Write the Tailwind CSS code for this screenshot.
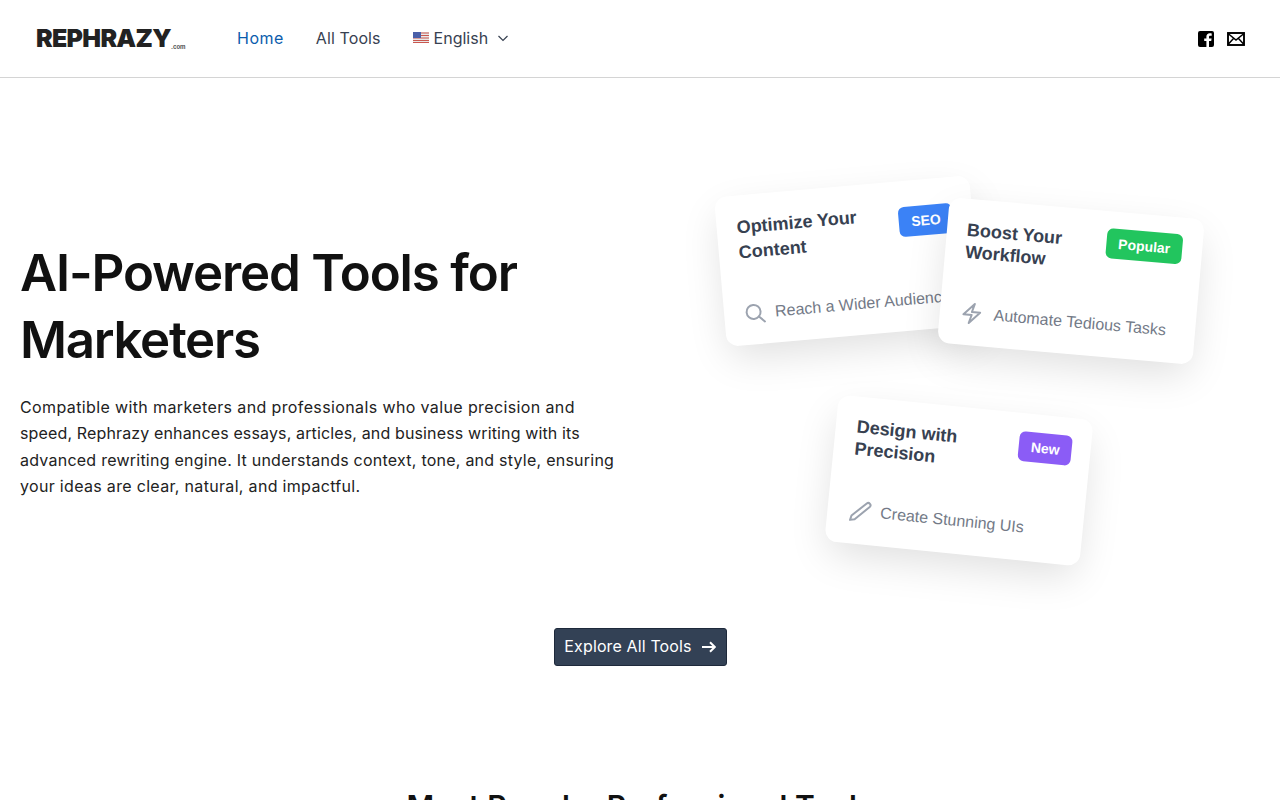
<!doctype html>
<html lang="en"><head><meta charset="utf-8"><title>Rephrazy</title>
<script src="https://cdn.jsdelivr.net/npm/@tailwindcss/browser@4"></script></head>
<body class="bg-white">
<div class="h-[800px] overflow-hidden font-['Inter',sans-serif] text-[#374151]">
<header class="h-[78px] border-b border-[#d4d4d4] flex items-center pl-9 pr-[35px]">
  <div class="w-[201px] flex items-end text-[#222] leading-none">
    <span class="text-[25px] font-black tracking-[-0.7px]">REPHRAZY</span><span class="text-[6px] font-bold text-[#555] mb-[1px]">.com</span>
  </div>
  <nav class="flex items-center gap-8 text-[16px] flex-1 pb-[2px]">
    <a class="text-[#0b5cad] tracking-[0.5px]">Home</a>
    <a class="tracking-[0.1px]">All Tools</a>
    <div class="flex items-center">
      <svg width="16" height="11" viewBox="0 0 16 11" class="mr-[5px]"><rect width="16" height="11" fill="#e8e8e8"/><path d="M0 1h16M0 3.500h16M0 6h16M0 8.500h16M0 10.500h16" stroke="#c9574f" stroke-width="1.200"/><rect width="8" height="6" fill="#4a5fa8"/></svg>
      <span>English</span>
      <svg width="12" height="12" viewBox="0 0 12 12" class="ml-[9px]" fill="none" stroke="#374151" stroke-width="1.200"><path d="M1.500 4l4.500 4.500L10.500 4"/></svg>
    </div>
  </nav>
  <div class="flex items-center gap-[12px]">
    <svg width="18" height="18" viewBox="0 0 18 18"><path fill="#000" d="M3 1h12a2 2 0 0 1 2 2v12a2 2 0 0 1-2 2h-3v-6h2.200l.4-2.600H12V7c0-.8.300-1.300 1.300-1.300h1.400V3.400c-.4 0-1.200-.1-2-.1-2 0-3.300 1.200-3.300 3.400v1.700H7.200V11h2.200v6H3a2 2 0 0 1-2-2V3a2 2 0 0 1 2-2z"/></svg>
    <svg width="18" height="14" viewBox="0 0 18 14" fill="none" stroke="#000" stroke-width="1.900"><rect x="1" y="1" width="16" height="12"/><path d="M1 1.500l8 6.500 8-6.500M1 12.500l5.500-6M17 12.500l-5.500-6" stroke-width="1.500"/></svg>
  </div>
</header>

<section class="h-[550px] flex items-start">
  <div class="w-[640px] pl-5 pt-[161px] shrink-0">
    <h1 class="text-[51px] leading-[67px] font-semibold text-[#111] tracking-[-1.150px]">AI-Powered Tools for<br><span class="tracking-[-1.300px]">Marketers</span></h1>
    <p class="mt-[21px] text-[16px] leading-[26.4px] text-[#222]"><span class="block tracking-[0.380px]">Compatible with marketers and professionals who value precision and</span><span class="block tracking-[0.140px]">speed, Rephrazy enhances essays, articles, and business writing with its</span><span class="block tracking-[0.240px]">advanced rewriting engine. It understands context, tone, and style, ensuring</span><span class="block tracking-[0.320px]">your ideas are clear, natural, and impactful.</span></p>
  </div>
  <div class="relative flex-1 h-full font-['Liberation_Sans',sans-serif]">
    <!-- card 1 -->
    <article class="absolute left-[80px] top-[108px] w-64 h-[150px] pl-5 pt-5 pr-5 bg-white rounded-xl shadow-[0_15px_40px_-4px_rgba(0,0,0,0.13)] rotate-[-5deg]">
      <div class="flex justify-between items-start">
        <h3 class="text-[18px] leading-[25px] font-bold text-[#374151] w-[130px]">Optimize Your Content</h3>
        <span class="mt-[6px] bg-[#3b82f6] text-white text-[14px] leading-[20px] font-bold px-3 py-[5px] rounded-md">SEO</span>
      </div>
      <div class="flex items-center mt-[37px] -ml-[1px] text-[16px] text-[#737a87] whitespace-nowrap">
        <svg width="24" height="24" viewBox="0 0 24 24" fill="none" stroke="#9ca3af" stroke-width="2" class="mr-[8px] shrink-0"><circle cx="10.500" cy="10.500" r="7"/><path d="M15.500 15.500L21 21" stroke-linecap="round"/></svg>
        Reach a Wider Audience
      </div>
    </article>
    <!-- card 2 -->
    <article class="absolute left-[303px] top-[130px] w-64 h-[146px] pl-5 pt-5 pr-5 bg-white rounded-xl shadow-[0_15px_40px_-4px_rgba(0,0,0,0.13)] rotate-[5deg]">
      <div class="flex justify-between items-start">
        <h3 class="text-[18px] leading-[22px] font-bold text-[#374151] w-[120px]">Boost Your Workflow</h3>
        <span class="-mt-[3px] bg-[#22c55e] text-white text-[14px] leading-[20px] font-bold px-3 py-[5px] rounded-md">Popular</span>
      </div>
      <div class="flex items-center mt-[38px] text-[16px] text-[#737a87] whitespace-nowrap">
        <svg width="24" height="24" viewBox="0 0 24 24" fill="none" stroke="#9ca3af" stroke-width="2" stroke-linejoin="round" class="mr-[10px] shrink-0"><path d="M3.750 13.500l10.500-11.250L12 10.500h8.250L9.750 21.750 12 13.500H3.750z"/></svg>
        Automate Tedious Tasks
      </div>
    </article>
    <!-- card 3 -->
    <article class="absolute left-[191px] top-[329px] w-64 h-[147px] pl-[21px] pt-[19px] pr-[19px] bg-white rounded-xl shadow-[0_15px_40px_-4px_rgba(0,0,0,0.13)] rotate-[5.700deg]">
      <div class="flex justify-between items-start">
        <h3 class="text-[18px] leading-[22px] font-bold text-[#374151] w-[120px]">Design with Precision</h3>
        <span class="-mt-[1px] bg-[#8b5cf6] text-white text-[14px] leading-[20px] font-bold px-3 py-[5px] rounded-md">New</span>
      </div>
      <div class="flex items-center mt-[39px] text-[16px] text-[#737a87] whitespace-nowrap">
        <svg width="24" height="24" viewBox="0 0 24 24" fill="none" stroke="#9ca3af" stroke-width="2" stroke-linejoin="round" class="mr-[8px] shrink-0"><path d="M2.500 21.500l1-4.500L17.500 3.500a2.300 2.300 0 0 1 3.300 3.200L7 20.500z"/></svg>
        Create Stunning UIs
      </div>
    </article>
  </div>
</section>

<div class="flex justify-center">
  <a class="h-[38px] w-[173px] pb-[2px] flex items-center justify-center gap-[10px] bg-[#334155] border border-[#1e293b] rounded-[3px] text-white text-[16px] tracking-[0.13px]">Explore All Tools
    <svg width="14" height="12" viewBox="0 0 14 12" fill="none" stroke="#fff" stroke-width="2" class="mt-[2px]"><path d="M0 6h12.500M8 1.200L12.800 6 8 10.800"/></svg>
  </a>
</div>
<h2 class="mt-[116px] text-center text-[30px] leading-[48px] font-semibold text-[#111] tracking-[0.05px]">Most Popular Professional Tools</h2>
</div>
</body></html>
